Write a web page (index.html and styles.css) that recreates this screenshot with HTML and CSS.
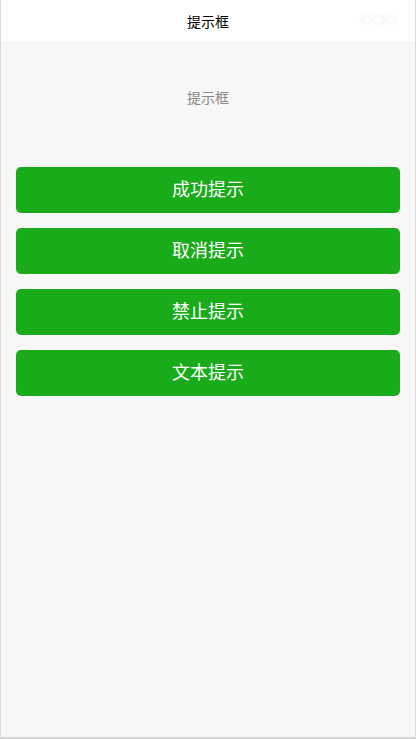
FILE: index.html
```html
<!DOCTYPE html>
<html>
<head>
<meta charset="utf-8" />
<title>提示框</title>
<link rel="stylesheet" href="styles.css">
</head>
<body>
<div class="page">
    <div class="nav">
        <span class="nav-title">提示框</span>
        <div class="nav-dots"><i></i><i></i><i></i></div>
    </div>
    <div class="desc">提示框</div>
    <div class="btns">
        <div class="btn">成功提示</div>
        <div class="btn">取消提示</div>
        <div class="btn">禁止提示</div>
        <div class="btn">文本提示</div>
    </div>
</div>
</body>
</html>
```
FILE: styles.css
```css
body,div{margin:0;padding:0;}
body{background:#fff;font-family:"Liberation Sans","Noto Sans CJK SC",sans-serif;}
.page{box-sizing:border-box;width:416px;height:739px;background:#f7f7f7;border:1px solid #dcdcdc;border-top:0;border-bottom:2px solid #d6d6d6;}
.nav{position:relative;height:41px;background:#fff;display:flex;align-items:center;justify-content:center;}
.nav-title{font-size:14px;color:#000;}
.nav-dots{position:absolute;right:21px;top:16px;display:flex;gap:5px;}
.nav-dots i{display:block;width:7px;height:7px;border-radius:50%;background:#fff;box-shadow:0 0 5px rgba(0,0,0,0.1);}
.desc{text-align:center;font-size:14px;color:#888;padding-top:48px;line-height:18px;}
.btns{display:flex;flex-direction:column;gap:15px;padding:60px 15px 0 15px;}
.btn{height:46px;line-height:46px;background:#1aab1b;color:#fff;text-align:center;font-size:18px;border-radius:5px;}
```
